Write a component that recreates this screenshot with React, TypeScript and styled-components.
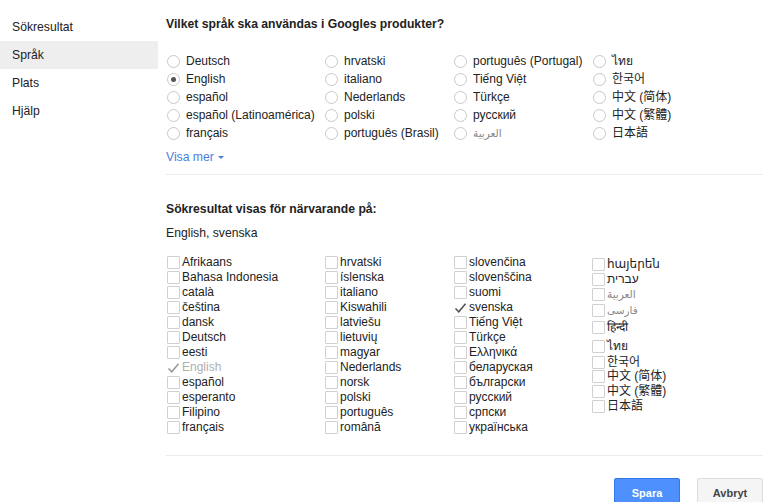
import styled, { createGlobalStyle } from "styled-components";

const GlobalStyle = createGlobalStyle`
  html, body {
    margin: 0;
    padding: 0;
    background: #fff;
  }
  body {
    font-family: "Liberation Sans", Arial, "DejaVu Sans", "Noto Sans CJK SC", sans-serif;
    font-size: 12.2px;
    color: #222;
  }
`;

const navItems = ["Sökresultat", "Språk", "Plats", "Hjälp"];

const radioColumns: string[][] = [
  ["Deutsch", "English", "español", "español (Latinoamérica)", "français"],
  ["hrvatski", "italiano", "Nederlands", "polski", "português (Brasil)"],
  ["português (Portugal)", "Tiếng Việt", "Türkçe", "русский", "العربية"],
  ["ไทย", "한국어", "中文 (简体)", "中文 (繁體)", "日本語"],
];
const radioWidths = [158, 129, 139, 120];

type CheckItem = { label: string; checked?: boolean; disabled?: boolean; h?: number; faint?: boolean };

const checkColumns: CheckItem[][] = [
  [
    { label: "Afrikaans" },
    { label: "Bahasa Indonesia" },
    { label: "català" },
    { label: "čeština" },
    { label: "dansk" },
    { label: "Deutsch" },
    { label: "eesti" },
    { label: "English", checked: true, disabled: true },
    { label: "español" },
    { label: "esperanto" },
    { label: "Filipino" },
    { label: "français" },
  ],
  [
    { label: "hrvatski" },
    { label: "íslenska" },
    { label: "italiano" },
    { label: "Kiswahili" },
    { label: "latviešu" },
    { label: "lietuvių" },
    { label: "magyar" },
    { label: "Nederlands" },
    { label: "norsk" },
    { label: "polski" },
    { label: "português" },
    { label: "română" },
  ],
  [
    { label: "slovenčina" },
    { label: "slovenščina" },
    { label: "suomi" },
    { label: "svenska", checked: true },
    { label: "Tiếng Việt" },
    { label: "Türkçe" },
    { label: "Ελληνικά" },
    { label: "беларуская" },
    { label: "български" },
    { label: "русский" },
    { label: "српски" },
    { label: "українська" },
  ],
  [
    { label: "հայերեն" },
    { label: "עברית" },
    { label: "العربية", faint: true },
    { label: "فارسی", h: 16, faint: true },
    { label: "हिन्दी", h: 19 },
    { label: "ไทย", h: 18 },
    { label: "한국어", h: 14 },
    { label: "中文 (简体)" },
    { label: "中文 (繁體)" },
    { label: "日本語" },
  ],
];
const checkWidths = [158, 129, 138, 140];

export default function App() {
  return (
    <>
      <GlobalStyle />
      <Page>
        <Sidebar>
          {navItems.map((item) => (
            <NavItem key={item} $active={item === "Språk"}>
              {item}
            </NavItem>
          ))}
        </Sidebar>

        <Main>
          <SectionTitle>Vilket språk ska användas i Googles produkter?</SectionTitle>

          <RadioGrid>
            {radioColumns.map((col, ci) => (
              <Column key={ci} style={{ width: radioWidths[ci] }}>
                {col.map((label) => (
                  <RadioRow key={label}>
                    <Radio $checked={label === "English" && ci === 0} />
                    <Label $faint={label === "العربية"}>{label}</Label>
                  </RadioRow>
                ))}
              </Column>
            ))}
          </RadioGrid>

          <MoreLink href="#">
            Visa mer <Caret />
          </MoreLink>

          <Divider />

          <SectionTitle $top={26}>Sökresultat visas för närvarande på:</SectionTitle>
          <Current>English, svenska</Current>

          <CheckGrid>
            {checkColumns.map((col, ci) => (
              <Column key={ci} style={{ width: checkWidths[ci] }} $offset={ci === 3 ? 2 : 0}>
                {col.map((item) => (
                  <CheckRow key={item.label} $h={item.h ?? 15}>
                    {item.checked ? (
                      <CheckMark $disabled={item.disabled}>
                        <svg width="13" height="12" viewBox="0 0 13 12">
                          <path
                            d="M1.5 6.5 L4.8 9.8 L11.5 1.8"
                            fill="none"
                            stroke="currentColor"
                            strokeWidth="1.6"
                          />
                        </svg>
                      </CheckMark>
                    ) : (
                      <Box />
                    )}
                    <Label $disabled={item.disabled} $faint={item.faint}>
                      {item.label}
                    </Label>
                  </CheckRow>
                ))}
              </Column>
            ))}
          </CheckGrid>

          <Divider $top={20} />

          <Actions>
            <Button $primary>Spara</Button>
            <Button>Avbryt</Button>
          </Actions>
        </Main>
      </Page>
    </>
  );
}

const Page = styled.div`
  display: flex;
  align-items: flex-start;
`;

const Sidebar = styled.nav`
  width: 158px;
  flex-shrink: 0;
  padding-top: 13px;
  display: flex;
  flex-direction: column;
`;

const NavItem = styled.div<{ $active?: boolean }>`
  height: 28px;
  line-height: 28px;
  padding-left: 12px;
  color: #222;
  background: ${({ $active }) => ($active ? "#eeeeee" : "transparent")};
`;

const Main = styled.main`
  flex: 1;
  margin-left: 8px;
  padding: 16px 5px 0 0;
  display: flex;
  flex-direction: column;
`;

const SectionTitle = styled.h2<{ $top?: number }>`
  margin: ${({ $top }) => $top ?? 0}px 0 0;
  font-size: 12.2px;
  line-height: 16px;
  font-weight: bold;
  color: #222;
`;

const RadioGrid = styled.div`
  margin-top: 20px;
  display: flex;
`;

const Column = styled.div<{ $offset?: number }>`
  display: flex;
  flex-direction: column;
  padding-top: ${({ $offset }) => $offset ?? 0}px;
`;

const RadioRow = styled.div`
  height: 18px;
  display: flex;
  align-items: center;
  gap: 6px;
  white-space: nowrap;
`;

const Radio = styled.span<{ $checked?: boolean }>`
  width: 13px;
  height: 13px;
  margin-left: 1px;
  box-sizing: border-box;
  border-radius: 50%;
  border: 1px solid #c8c8c8;
  background: #fff;
  display: grid;
  place-items: center;
  flex-shrink: 0;

  &::after {
    content: "";
    width: 5px;
    height: 5px;
    border-radius: 50%;
    background: ${({ $checked }) => ($checked ? "#555" : "transparent")};
  }
`;

const Label = styled.span<{ $disabled?: boolean; $faint?: boolean }>`
  color: ${({ $disabled, $faint }) => ($disabled ? "#b0b0b0" : $faint ? "#888" : "#222")};
  font-size: ${({ $faint }) => ($faint ? "10.5px" : "12px")};
  line-height: 15px;
`;

const MoreLink = styled.a`
  margin-top: 7px;
  line-height: 16px;
  color: #4a7fe0;
  text-decoration: none;
  display: inline-flex;
  align-items: center;
  gap: 4px;
  align-self: flex-start;
`;

const Caret = styled.span`
  width: 0;
  height: 0;
  border-left: 3px solid transparent;
  border-right: 3px solid transparent;
  border-top: 3px solid #4a7fe0;
  margin-top: 1px;
`;

const Divider = styled.hr<{ $top?: number }>`
  margin: ${({ $top }) => $top ?? 9}px 0 0;
  border: none;
  border-top: 1px solid #ebebeb;
  width: 100%;
`;

const Current = styled.div`
  margin-top: 8px;
  line-height: 16px;
  color: #222;
`;

const CheckGrid = styled.div`
  margin-top: 14px;
  display: flex;
`;

const CheckRow = styled.div<{ $h: number }>`
  height: ${({ $h }) => $h}px;
  display: flex;
  align-items: center;
  gap: 2px;
  white-space: nowrap;
`;

const Box = styled.span`
  width: 13px;
  height: 13px;
  box-sizing: border-box;
  margin-left: 1px;
  border: 1px solid #d0d0d0;
  border-radius: 1px;
  background: #fff;
  flex-shrink: 0;
`;

const CheckMark = styled.span`
  width: 13px;
  height: 13px;
  margin-left: 1px;
  display: grid;
  place-items: center;
  color: ${({ $disabled }: { $disabled?: boolean }) => ($disabled ? "#9a9a9a" : "#555")};
  flex-shrink: 0;
`;

const Actions = styled.div`
  margin-top: 22px;
  display: flex;
  justify-content: flex-end;
  gap: 17px;
`;

const Button = styled.button<{ $primary?: boolean }>`
  width: 66px;
  height: 29px;
  box-sizing: border-box;
  border-radius: 2px;
  font-family: "Liberation Sans", Arial, sans-serif;
  font-size: 11px;
  font-weight: bold;
  cursor: pointer;
  border: 1px solid ${({ $primary }) => ($primary ? "#3079ed" : "#dcdcdc")};
  background: ${({ $primary }) => ($primary ? "#4d90fe" : "#f5f5f5")};
  color: ${({ $primary }) => ($primary ? "#fff" : "#444")};
`;
